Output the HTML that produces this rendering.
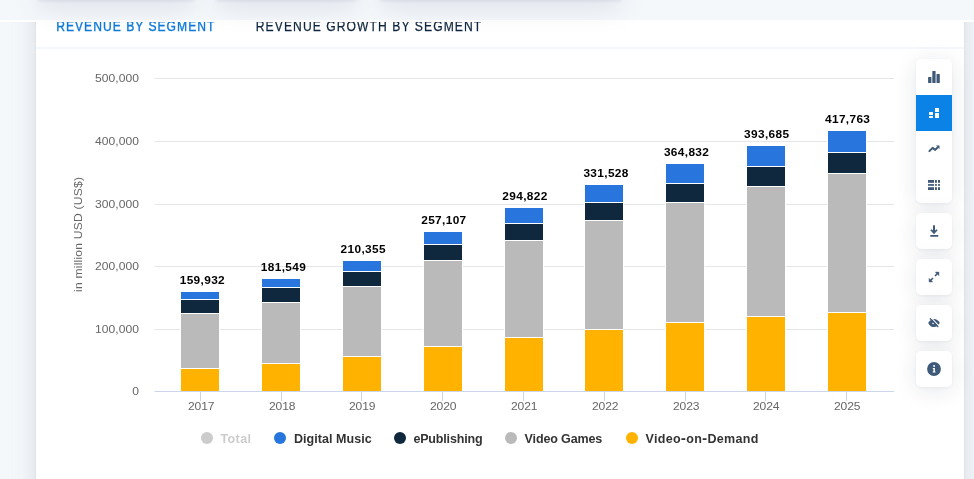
<!DOCTYPE html>
<html lang="en">
<head>
<meta charset="utf-8">
<title>Revenue by Segment</title>
<style>
*{box-sizing:border-box}
html,body{margin:0;padding:0}
body{width:974px;height:479px;overflow:hidden;position:relative;background:#f5f8fb;font-family:"Liberation Sans",sans-serif}
.head{position:absolute;left:0;top:0;width:974px;height:20px;background:#f5f8fb;overflow:hidden}
.blob{position:absolute;top:-24px;height:24px;z-index:5;border-radius:4px;box-shadow:0 1px 4px rgba(10,25,75,.09),0 8px 28px rgba(10,25,75,.10)}
.strip{position:absolute;left:0;top:20px;width:974px;height:2px;background:#fff}
.card{position:absolute;left:36px;top:-78px;width:928px;height:700px;background:#fff;box-shadow:0 0 1px rgba(15,40,62,.18),0 0 26px rgba(15,35,65,.12)}
.tabs{position:absolute;left:0;top:100px;width:928px;height:27px;border-bottom:2px solid #f4f7fb}
.tools{position:absolute;left:880px;width:36px;background:#fff;border-radius:5px;box-shadow:0 1px 3px rgba(15,40,62,.05),0 3px 22px rgba(15,40,62,.11);overflow:hidden}
.tools i{display:block;width:36px;height:36px}
.tools i.on{background:#0b82e6}
svg{position:absolute;left:0;top:0;will-change:transform}
svg text{font-family:"Liberation Sans",sans-serif}
.tab{font-size:14.8px}
.ax{font-size:11.5px;fill:#666}
.dl{font-size:11px;font-weight:700;fill:#000}
.lg{font-size:12px;font-weight:700}
.nb{font-family:"DejaVu Sans",sans-serif}
</style>
</head>
<body>
<div class="card">
  <div class="tabs"></div>
  <div class="tools" style="top:137px"><i></i><i class="on"></i><i></i><i></i></div>
  <div class="tools" style="top:291px"><i></i></div>
  <div class="tools" style="top:337px"><i></i></div>
  <div class="tools" style="top:383px"><i></i></div>
  <div class="tools" style="top:429px"><i></i></div>
</div>
<div class="head"></div>
<div class="strip"></div>
<div class="blob" style="left:37px;width:158px"></div>
<div class="blob" style="left:215px;width:142px"></div>
<div class="blob" style="left:379px;width:243px"></div>
<svg width="974" height="479" viewBox="0 0 974 479">
<path d="M154.5 78.5H894" stroke="#e6e6e6" stroke-width="1" fill="none"/>
<path d="M154.5 141.5H894" stroke="#e6e6e6" stroke-width="1" fill="none"/>
<path d="M154.5 204.5H894" stroke="#e6e6e6" stroke-width="1" fill="none"/>
<path d="M154.5 266.5H894" stroke="#e6e6e6" stroke-width="1" fill="none"/>
<path d="M154.5 329.5H894" stroke="#e6e6e6" stroke-width="1" fill="none"/>
<rect x="180.5" y="291.5" width="39" height="8.0" fill="#2875dd" stroke="#fff" stroke-width="1"/>
<rect x="180.5" y="299.5" width="39" height="14.0" fill="#0f283e" stroke="#fff" stroke-width="1"/>
<rect x="180.5" y="313.5" width="39" height="55.0" fill="#bababa" stroke="#fff" stroke-width="1"/>
<rect x="180.5" y="368.5" width="39" height="23.0" fill="#ffb300" stroke="#fff" stroke-width="1"/>
<rect x="261.5" y="278.5" width="39" height="9.0" fill="#2875dd" stroke="#fff" stroke-width="1"/>
<rect x="261.5" y="287.5" width="39" height="15.0" fill="#0f283e" stroke="#fff" stroke-width="1"/>
<rect x="261.5" y="302.5" width="39" height="61.0" fill="#bababa" stroke="#fff" stroke-width="1"/>
<rect x="261.5" y="363.5" width="39" height="28.0" fill="#ffb300" stroke="#fff" stroke-width="1"/>
<rect x="342.5" y="260.5" width="39" height="11.0" fill="#2875dd" stroke="#fff" stroke-width="1"/>
<rect x="342.5" y="271.5" width="39" height="15.0" fill="#0f283e" stroke="#fff" stroke-width="1"/>
<rect x="342.5" y="286.5" width="39" height="70.0" fill="#bababa" stroke="#fff" stroke-width="1"/>
<rect x="342.5" y="356.5" width="39" height="35.0" fill="#ffb300" stroke="#fff" stroke-width="1"/>
<rect x="423.5" y="231.5" width="39" height="13.0" fill="#2875dd" stroke="#fff" stroke-width="1"/>
<rect x="423.5" y="244.5" width="39" height="16.0" fill="#0f283e" stroke="#fff" stroke-width="1"/>
<rect x="423.5" y="260.5" width="39" height="86.0" fill="#bababa" stroke="#fff" stroke-width="1"/>
<rect x="423.5" y="346.5" width="39" height="45.0" fill="#ffb300" stroke="#fff" stroke-width="1"/>
<rect x="504.5" y="207.5" width="39" height="16.0" fill="#2875dd" stroke="#fff" stroke-width="1"/>
<rect x="504.5" y="223.5" width="39" height="17.0" fill="#0f283e" stroke="#fff" stroke-width="1"/>
<rect x="504.5" y="240.5" width="39" height="97.0" fill="#bababa" stroke="#fff" stroke-width="1"/>
<rect x="504.5" y="337.5" width="39" height="54.0" fill="#ffb300" stroke="#fff" stroke-width="1"/>
<rect x="584.5" y="184.5" width="39" height="18.0" fill="#2875dd" stroke="#fff" stroke-width="1"/>
<rect x="584.5" y="202.5" width="39" height="18.0" fill="#0f283e" stroke="#fff" stroke-width="1"/>
<rect x="584.5" y="220.5" width="39" height="109.0" fill="#bababa" stroke="#fff" stroke-width="1"/>
<rect x="584.5" y="329.5" width="39" height="62.0" fill="#ffb300" stroke="#fff" stroke-width="1"/>
<rect x="665.5" y="163.5" width="39" height="20.0" fill="#2875dd" stroke="#fff" stroke-width="1"/>
<rect x="665.5" y="183.5" width="39" height="19.0" fill="#0f283e" stroke="#fff" stroke-width="1"/>
<rect x="665.5" y="202.5" width="39" height="120.0" fill="#bababa" stroke="#fff" stroke-width="1"/>
<rect x="665.5" y="322.5" width="39" height="69.0" fill="#ffb300" stroke="#fff" stroke-width="1"/>
<rect x="746.5" y="145.5" width="39" height="21.0" fill="#2875dd" stroke="#fff" stroke-width="1"/>
<rect x="746.5" y="166.5" width="39" height="20.0" fill="#0f283e" stroke="#fff" stroke-width="1"/>
<rect x="746.5" y="186.5" width="39" height="130.0" fill="#bababa" stroke="#fff" stroke-width="1"/>
<rect x="746.5" y="316.5" width="39" height="75.0" fill="#ffb300" stroke="#fff" stroke-width="1"/>
<rect x="827.5" y="130.5" width="39" height="22.0" fill="#2875dd" stroke="#fff" stroke-width="1"/>
<rect x="827.5" y="152.5" width="39" height="21.0" fill="#0f283e" stroke="#fff" stroke-width="1"/>
<rect x="827.5" y="173.5" width="39" height="139.0" fill="#bababa" stroke="#fff" stroke-width="1"/>
<rect x="827.5" y="312.5" width="39" height="79.0" fill="#ffb300" stroke="#fff" stroke-width="1"/>
<path d="M154.5 391.5H894" stroke="#ccd6eb" stroke-width="1" fill="none"/>
<path d="M200.5 392V401" stroke="#ccd6eb" stroke-width="1" fill="none"/>
<path d="M281.5 392V401" stroke="#ccd6eb" stroke-width="1" fill="none"/>
<path d="M361.5 392V401" stroke="#ccd6eb" stroke-width="1" fill="none"/>
<path d="M442.5 392V401" stroke="#ccd6eb" stroke-width="1" fill="none"/>
<path d="M523.5 392V401" stroke="#ccd6eb" stroke-width="1" fill="none"/>
<path d="M604.5 392V401" stroke="#ccd6eb" stroke-width="1" fill="none"/>
<path d="M685.5 392V401" stroke="#ccd6eb" stroke-width="1" fill="none"/>
<path d="M765.5 392V401" stroke="#ccd6eb" stroke-width="1" fill="none"/>
<path d="M846.5 392V401" stroke="#ccd6eb" stroke-width="1" fill="none"/>
<text transform="translate(139,82.4) scale(1.05,1)" text-anchor="end" class="ax" textLength="41.90" lengthAdjust="spacing">500,000</text>
<text transform="translate(139,145.4) scale(1.05,1)" text-anchor="end" class="ax" textLength="41.90" lengthAdjust="spacing">400,000</text>
<text transform="translate(139,208.4) scale(1.05,1)" text-anchor="end" class="ax" textLength="41.90" lengthAdjust="spacing">300,000</text>
<text transform="translate(139,270.4) scale(1.05,1)" text-anchor="end" class="ax" textLength="41.90" lengthAdjust="spacing">200,000</text>
<text transform="translate(139,333.4) scale(1.05,1)" text-anchor="end" class="ax" textLength="41.90" lengthAdjust="spacing">100,000</text>
<text transform="translate(139,395.4) scale(1.05,1)" text-anchor="end" class="ax">0</text>
<text transform="translate(201.2,410) scale(1.05,1)" text-anchor="middle" class="ax" textLength="25.33" lengthAdjust="spacing">2017</text>
<text transform="translate(282.2,410) scale(1.05,1)" text-anchor="middle" class="ax" textLength="25.33" lengthAdjust="spacing">2018</text>
<text transform="translate(362.2,410) scale(1.05,1)" text-anchor="middle" class="ax" textLength="25.33" lengthAdjust="spacing">2019</text>
<text transform="translate(443.2,410) scale(1.05,1)" text-anchor="middle" class="ax" textLength="25.33" lengthAdjust="spacing">2020</text>
<text transform="translate(524.2,410) scale(1.05,1)" text-anchor="middle" class="ax" textLength="25.33" lengthAdjust="spacing">2021</text>
<text transform="translate(605.2,410) scale(1.05,1)" text-anchor="middle" class="ax" textLength="25.33" lengthAdjust="spacing">2022</text>
<text transform="translate(686.2,410) scale(1.05,1)" text-anchor="middle" class="ax" textLength="25.33" lengthAdjust="spacing">2023</text>
<text transform="translate(766.2,410) scale(1.05,1)" text-anchor="middle" class="ax" textLength="25.33" lengthAdjust="spacing">2024</text>
<text transform="translate(847.2,410) scale(1.05,1)" text-anchor="middle" class="ax" textLength="25.33" lengthAdjust="spacing">2025</text>
<text transform="translate(81.6,234.5) rotate(-90) scale(1.05,1)" text-anchor="middle" class="ax" textLength="109.52" lengthAdjust="spacing">in million USD (US$)</text>
<text transform="translate(202.2,284) scale(1.08,1)" text-anchor="middle" class="dl" textLength="41.67" lengthAdjust="spacing">159,932</text>
<text transform="translate(283.3,271) scale(1.08,1)" text-anchor="middle" class="dl" textLength="41.67" lengthAdjust="spacing">181,549</text>
<text transform="translate(363.1,253) scale(1.08,1)" text-anchor="middle" class="dl" textLength="41.67" lengthAdjust="spacing">210,355</text>
<text transform="translate(443.7,224) scale(1.08,1)" text-anchor="middle" class="dl" textLength="41.67" lengthAdjust="spacing">257,107</text>
<text transform="translate(524.8,200) scale(1.08,1)" text-anchor="middle" class="dl" textLength="41.67" lengthAdjust="spacing">294,822</text>
<text transform="translate(605.9,177) scale(1.08,1)" text-anchor="middle" class="dl" textLength="41.67" lengthAdjust="spacing">331,528</text>
<text transform="translate(686.4,156) scale(1.08,1)" text-anchor="middle" class="dl" textLength="41.67" lengthAdjust="spacing">364,832</text>
<text transform="translate(766.6,138) scale(1.08,1)" text-anchor="middle" class="dl" textLength="41.67" lengthAdjust="spacing">393,685</text>
<text transform="translate(847.5,123) scale(1.08,1)" text-anchor="middle" class="dl" textLength="41.67" lengthAdjust="spacing">417,763</text>
<circle cx="207" cy="438" r="6" fill="#cccccc"/>
<text transform="translate(220.4,443) scale(1.045,1)" class="lg" fill="#cccccc" textLength="29.38" lengthAdjust="spacing">Total</text>
<circle cx="280" cy="438" r="6" fill="#2875dd"/>
<text transform="translate(294,443) scale(1.045,1)" class="lg" fill="#333" textLength="74.45" lengthAdjust="spacing">Digital Music</text>
<circle cx="400" cy="438" r="6" fill="#0f283e"/>
<text transform="translate(413.4,443) scale(1.045,1)" class="lg" fill="#333" textLength="66.22" lengthAdjust="spacing">ePublishing</text>
<circle cx="511" cy="438" r="6" fill="#bababa"/>
<text transform="translate(524.6,443) scale(1.045,1)" class="lg" fill="#333" textLength="74.26" lengthAdjust="spacing">Video Games</text>
<circle cx="632" cy="438" r="6" fill="#ffb300"/>
<text transform="translate(645.6,443) scale(1.045,1)" class="lg" fill="#333" textLength="107.85" lengthAdjust="spacing">Video<tspan class="nb">‑</tspan>on<tspan class="nb">‑</tspan>Demand</text>
<text transform="translate(56.2,31) scale(0.82,1)" class="tab" fill="#0f7bdc" stroke="#0f7bdc" stroke-width=".4" textLength="192.9" lengthAdjust="spacing">REVENUE BY SEGMENT</text>
<text transform="translate(255.8,31) scale(0.82,1)" class="tab" fill="#0f2741" stroke="#0f2741" stroke-width=".25" textLength="274.9" lengthAdjust="spacing">REVENUE GROWTH BY SEGMENT</text>
<rect x="0" y="20" width="974" height="2" fill="#fff"/>
<g fill="#3f5a78"><rect x="928.1" y="77" width="3.3" height="6" rx=".6"/><rect x="932.3" y="71" width="3.3" height="12" rx=".6"/><rect x="936.5" y="74" width="3.3" height="9" rx=".6"/></g>
<g fill="#fff"><rect x="929" y="112" width="4" height="3" rx=".5"/><rect x="929" y="116" width="4" height="2" rx=".5"/><rect x="935" y="108" width="4" height="4" rx=".5"/><rect x="935" y="113" width="4" height="5" rx=".5"/></g>
<g><path d="M929.4 151.1L932.6 147.9L935.2 149.9L937.6 147.5" fill="none" stroke="#3f5a78" stroke-width="2" stroke-linecap="round" stroke-linejoin="round"/><path d="M936 145.4H939.5V149Z" fill="#3f5a78"/></g>
<g fill="#3f5a78"><rect x="928" y="180" width="6" height="2.8"/><rect x="935" y="180" width="1.9" height="2.8"/><rect x="938" y="180" width="2" height="2.8"/><rect x="928" y="184.1" width="6" height="1.7"/><rect x="935" y="184.1" width="1.9" height="1.7"/><rect x="938" y="184.1" width="2" height="1.7"/><rect x="928" y="187.2" width="6" height="2.8"/><rect x="935" y="187.2" width="1.9" height="2.8"/><rect x="938" y="187.2" width="2" height="2.8"/></g>
<g fill="#3f5a78"><rect x="933" y="225.3" width="2" height="6.2"/><path d="M930.6 230.3L934 234.1L937.4 230.3L936.6 229.6L934 231.3L931.4 229.6Z" stroke="#3f5a78" stroke-width=".4" stroke-linejoin="round"/><rect x="930.3" y="235" width="8" height="1.8" rx=".3"/></g>
<g fill="#3f5a78" stroke="#3f5a78"><path d="M935.4 272.1H938.9V275.6Z" stroke-width=".5" stroke-linejoin="round"/><path d="M938 273L935 276" stroke-width="1.6" fill="none"/><path d="M929.1 278.4V281.9H932.6Z" stroke-width=".5" stroke-linejoin="round"/><path d="M930 281L933 278" stroke-width="1.6" fill="none"/></g>
<g><path d="M928.2 323C929.8 320 931.8 318.9 934 318.9C936.2 318.9 938.2 320 939.8 322.8C938.2 326 936.2 327.1 934 327.1C931.8 327.1 929.8 326 928.2 323Z" fill="#3f5a78"/><circle cx="933.2" cy="323.3" r=".9" fill="#fff"/><path d="M931.3 317.9L939 325.9" stroke="#fff" stroke-width="1.1" fill="none"/><path d="M930.3 318.7L937.9 326.7" stroke="#3f5a78" stroke-width="1.25" stroke-linecap="round" fill="none"/></g>
<g><circle cx="934" cy="369" r="6.9" fill="#3f5a78"/><circle cx="934.1" cy="366" r=".95" fill="#fff"/><path d="M932.8 368H934.9V371.4H935.5V372.6H932.7V371.4H933.4V369.1H932.8Z" fill="#fff"/></g>
</svg>
</body>
</html>
